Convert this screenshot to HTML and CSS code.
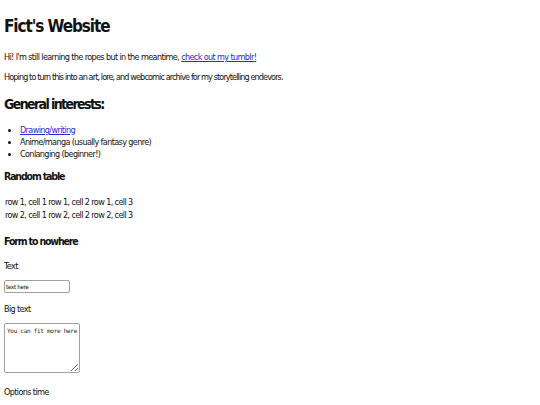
FILE: index.html
```html
<!DOCTYPE html>
<html>
<head>
<meta charset="utf-8">
<title>Fict's Website</title>
<link rel="stylesheet" href="styles.css">
</head>
<body>
<h1 class="title">Fict's Website</h1>
<p class="intro">Hi! I'm still learning the ropes but in the meantime, <a href="#">check out my tumblr!</a></p>
<p class="intro note">Hoping to turn this into an art, lore, and webcomic archive for my storytelling endevors.</p>
<h2 class="section">General interests:</h2>
<ul class="interests">
<li><a href="#">Drawing/writing</a></li>
<li>Anime/manga (usually fantasy genre)</li>
<li>Conlanging (beginner!)</li>
</ul>
<h3 class="sub">Random table</h3>
<table class="rand">
<tr><td>row 1, cell 1</td><td>row 1, cell 2</td><td>row 1, cell 3</td></tr>
<tr><td>row 2, cell 1</td><td>row 2, cell 2</td><td>row 2, cell 3</td></tr>
</table>
<h3 class="sub">Form to nowhere</h3>
<form class="nowhere">
<p class="lbl">Text</p>
<input class="field" type="text" value="text here">
<p class="lbl">Big text</p>
<textarea class="big">You can fit more here</textarea>
<p class="lbl">Options time</p>
</form>
</body>
</html>
```

FILE: styles.css
```css
body {
  margin: 4px;
  font-family: "DejaVu Sans Condensed", "DejaVu Sans", sans-serif;
  font-size: 9px;
  line-height: 12px;
  letter-spacing: -0.62px;
  color: #111;
  background: #fff;
}
a { color: #2a2ad8; }
.title {
  font-size: 17px;
  line-height: 20px;
  letter-spacing: -1.1px;
  margin: 12px 0 15px;
}
.intro { margin: 0 0 8px; }
.note { letter-spacing: -0.88px; }
.section {
  font-size: 14px;
  line-height: 17px;
  letter-spacing: -1.6px;
  margin: 13px 0 11px;
}
.interests {
  margin: 0 0 10px;
  padding-left: 16px;
}
.sub {
  font-size: 10.5px;
  line-height: 13px;
  letter-spacing: -1.15px;
  margin: 10px 0 12px;
}
.rand {
  border-spacing: 2px 1px;
  margin: 0 0 13px -1px;
}
.rand td {
  padding: 0;
  line-height: 12px;
}
.lbl { margin: 0 0 8px; }
.field {
  display: block;
  width: 66px;
  height: 13px;
  box-sizing: border-box;
  font-family: "DejaVu Sans Condensed", "DejaVu Sans", sans-serif;
  font-size: 6px;
  letter-spacing: -0.2px;
  color: #000;
  padding: 0 1px;
  border: 1px solid #a0a0a0;
  border-radius: 2px;
  margin: 2px 0 10px;
}
.big {
  display: block;
  width: 76px;
  height: 50px;
  box-sizing: border-box;
  font-family: "DejaVu Sans Mono", monospace;
  font-size: 6px;
  line-height: 7px;
  letter-spacing: -0.28px;
  color: #222;
  padding: 3px 2px;
  border: 1px solid #a0a0a0;
  border-radius: 2px;
  margin: 0 0 13px;
  resize: both;
}
```
